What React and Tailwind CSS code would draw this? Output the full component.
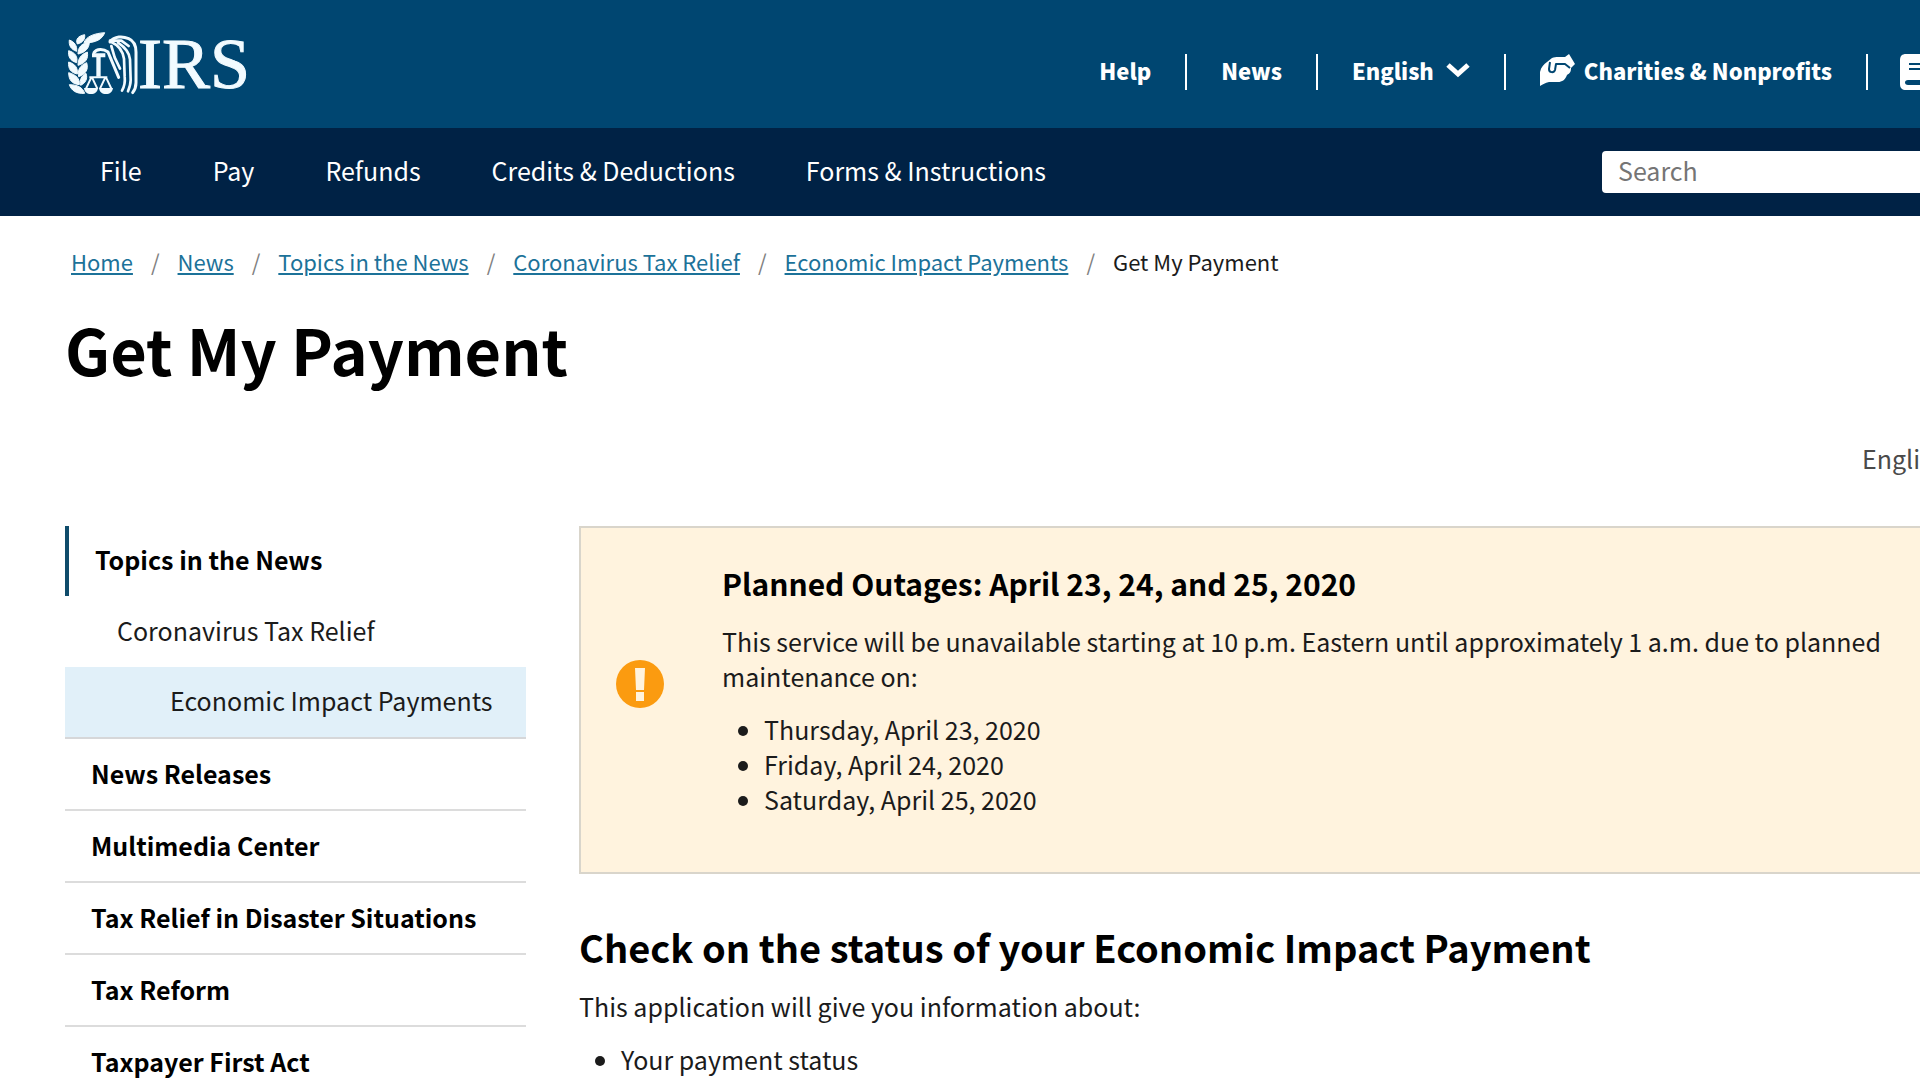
const utilityLink = "flex h-9 items-center px-[34px] pb-1 border-r-2 border-white text-[22px] leading-8 font-black text-white";

const mainLinks = ["File", "Pay", "Refunds", "Credits & Deductions", "Forms & Instructions"];
const crumbs = ["Home", "News", "Topics in the News", "Coronavirus Tax Relief", "Economic Impact Payments"];
const sections = ["News Releases", "Multimedia Center", "Tax Relief in Disaster Situations", "Tax Reform", "Taxpayer First Act"];
const outageDates = ["Thursday, April 23, 2020", "Friday, April 24, 2020", "Saturday, April 25, 2020"];

function Emblem() {
  return (
    <svg viewBox="12 16 210 192" className="h-16 w-[70px] shrink-0" fill="#f2fbff" aria-hidden="true">
      {/* laurel branch */}
      <g stroke="#f2fbff" strokeWidth="3" strokeLinejoin="round">
        <path d="M60 48C66 30 90 20 122 18 116 36 96 50 60 48Z" />
        <path d="M40 52C34 38 42 28 62 24 64 38 56 48 40 52Z" />
        <path d="M38 74C20 68 14 56 16 40 32 46 40 58 38 74Z" />
        <path d="M42 82C42 62 52 50 76 46 76 64 64 78 42 82Z" />
        <path d="M38 108C18 102 12 90 14 72 34 78 42 90 38 108Z" />
        <path d="M42 116C42 96 50 84 70 76 74 96 64 110 42 116Z" />
        <path d="M40 142C20 138 12 126 14 106 34 112 42 124 40 142Z" />
        <path d="M44 150C40 130 48 116 68 108 74 128 66 142 44 150Z" />
        <path d="M46 174C24 172 14 160 14 138 36 144 48 156 46 174Z" />
        <path d="M50 176C46 160 52 148 66 140 72 156 64 170 50 176Z" />
        <path d="M62 200C38 202 22 192 16 174 40 174 56 182 62 200Z" />
      </g>
      {/* scales */}
      <path d="M84 80h40v12h-14v58h-13V92H84Z" />
      <g fill="none" stroke="#f2fbff" strokeWidth="6" strokeLinejoin="round">
        <path d="M76 152h54M82 152l-16 34M84 152l16 34M124 152l-16 34M126 152l16 34" />
      </g>
      <path d="M60 184h42c-2 12-9 18-21 18s-19-6-21-18ZM105 184h42c-2 12-9 18-21 18s-19-6-21-18Z" />
      {/* eagle */}
      <g fill="none" stroke="#f2fbff" strokeLinejoin="round" strokeLinecap="round">
        <path d="M90 78C98 66 118 66 132 76L164 152" strokeWidth="9" />
        <path d="M138 46C152 28 176 28 194 36 208 42 216 56 216 76V168C216 182 212 190 206 198" strokeWidth="9" />
        <path d="M142 46C160 54 176 72 180 96L182 150C184 168 182 178 174 192" strokeWidth="8" />
        <path d="M142 58L152 92 168 126M162 48C180 60 196 74 198 98L200 160C200 174 196 184 192 194" strokeWidth="8" />
        <path d="M138 42L172 42 194 58" strokeWidth="8" />
      </g>
    </svg>
  );
}

function Handshake() {
  return (
    <svg viewBox="0 0 36 32" className="h-8 w-9 shrink-0" aria-hidden="true">
      <path d="M0 32V18C1 13 4 10 7 8L12 4C14 3 16 3 18 3H25L29 0 35 10 31 14C31 18 30 19 27 21 25 26 22 28 18 28L9 28C5 29 3 30 0 32Z" fill="#fff" />
      <path d="M10 8 9 15C9 19 14 19 15 16L16 10H25L30 14" fill="none" stroke="#004671" strokeWidth="2" strokeLinejoin="round" />
    </svg>
  );
}

function Book() {
  return (
    <svg viewBox="0 0 32 36" className="h-9 w-8 shrink-0" aria-hidden="true">
      <path d="M6 0h26v36H6c-4 0-6-2-6-6V6c0-4 2-6 6-6Z" fill="#fff" />
      <path d="M9 10h23M9 15h23" stroke="#004671" strokeWidth="2" />
      <path d="M32 26H8c-4 0-4 5 0 5h24Z" fill="#004671" />
    </svg>
  );
}

export default function App() {
  return (
    <div className="min-h-screen overflow-x-hidden bg-white font-['Noto_Sans_CJK_SC','Open_Sans',sans-serif] text-[#1b1b1b]">
      <header>
        <div className="flex h-32 items-center bg-[#004671] pl-[68px]">
          <a href="#home" className="flex items-center text-[#f2fbff]" aria-label="IRS home">
            <Emblem />
            <span className="font-['Liberation_Serif',serif] text-[72px] leading-[64px] [-webkit-text-stroke:1px_#f2fbff]">IRS</span>
          </a>
          <nav aria-label="Utility" className="mt-4 ml-auto flex items-center">
            <a href="#help" className={utilityLink}>Help</a>
            <a href="#news" className={utilityLink}>News</a>
            <button type="button" className={utilityLink}>
              English
              <svg viewBox="0 0 24 16" className="ml-3 h-4 w-6" fill="none" stroke="#fff" strokeWidth="5" aria-hidden="true">
                <path d="M2 3l10 9L22 3" />
              </svg>
            </button>
            <a href="#charities" className={utilityLink}>
              <Handshake />
              <span className="ml-2">Charities &amp; Nonprofits</span>
            </a>
            <a href="#pros" aria-label="Tax professionals" className="ml-8 flex w-5 overflow-hidden">
              <Book />
            </a>
          </nav>
        </div>
        <div className="flex h-[88px] items-center bg-[#002245] pl-[100px]">
          <nav aria-label="Main" className="flex gap-[71px] pb-1 text-[25px] leading-9 text-white">
            {mainLinks.map((label) => (
              <a key={label} href="#main">{label}</a>
            ))}
          </nav>
          <input
            type="search"
            aria-label="Search"
            placeholder="Search"
            className="ml-auto h-[42px] w-[318px] rounded-l-sm bg-white px-4 pb-1 text-[25px] text-black placeholder:text-[#757575]"
          />
        </div>
      </header>

      <main className="pl-[65px]">
        <nav aria-label="Breadcrumb" className="mt-[27px] pl-[6px] text-[22px] leading-9">
          <ol className="flex">
            {crumbs.map((label) => (
              <li key={label}>
                <a href="#crumb" className="text-[#1c7299] underline">{label}</a>
                <span className="px-[18px] text-[#808080]">/</span>
              </li>
            ))}
            <li aria-current="page">Get My Payment</li>
          </ol>
        </nav>

        <h1 className="mt-7 text-[63px] leading-[84px] font-bold text-black">Get My Payment</h1>

        <div className="mt-[49px] flex justify-end">
          <a href="#language" className="w-[58px] overflow-hidden text-[25px] leading-9 text-[#4a4a4a]">English</a>
        </div>

        <div className="mt-[50px] flex gap-[53px]">
          <nav aria-label="Section" className="w-[461px] shrink-0 text-[25px] leading-9">
            <a href="#topics" className="flex h-[70px] items-center border-l-4 border-[#0f4c6b] pb-1 pl-[26px] font-bold text-black">Topics in the News</a>
            <a href="#relief" className="flex h-[71px] items-center pb-1 pl-[52px]">Coronavirus Tax Relief</a>
            <a href="#payments" className="flex h-[72px] items-center border-b-2 border-[#d6d7d9] bg-[#e1f0f9] pb-1 pl-[105px]">Economic Impact Payments</a>
            {sections.map((label) => (
              <a key={label} href="#section" className="flex h-[72px] items-center border-b-2 border-[#dcdcdc] pb-0.5 pl-[26px] font-bold text-black">{label}</a>
            ))}
          </nav>

          <div className="min-w-0 flex-1">
            <section className="flex h-[348px] items-center border-2 border-r-0 border-[#d9d5cb] bg-[#fff3de]">
              <svg viewBox="0 0 48 48" className="mt-[-32px] ml-[35px] h-12 w-12 shrink-0" aria-label="Warning">
                <circle cx="24" cy="24" r="24" fill="#fb9b10" />
                <path d="M19 8h10l-1 22h-8ZM20 32h8v9h-8Z" fill="#fff3de" />
              </svg>
              <div className="ml-[58px] pb-5">
                <h2 className="text-[30px] leading-10 font-bold text-black">Planned Outages: April 23, 24, and 25, 2020</h2>
                <p className="mt-[21px] text-[25px] leading-[35px]">
                  This service will be unavailable starting at 10 p.m. Eastern until approximately 1 a.m. due to planned maintenance on:
                </p>
                <ul className="mt-[18px] list-disc pl-[42px] text-[25px] leading-[35px]">
                  {outageDates.map((date) => (
                    <li key={date}>{date}</li>
                  ))}
                </ul>
              </div>
            </section>
            <h2 className="mt-[46px] text-[38px] leading-[54px] font-bold text-black">Check on the status of your Economic Impact Payment</h2>
            <p className="mt-[15px] text-[25px] leading-[35px]">This application will give you information about:</p>
            <ul className="mt-[18px] list-disc pl-[42px] text-[25px] leading-[35px]">
              <li>Your payment status</li>
            </ul>
          </div>
        </div>
      </main>
    </div>
  );
}
